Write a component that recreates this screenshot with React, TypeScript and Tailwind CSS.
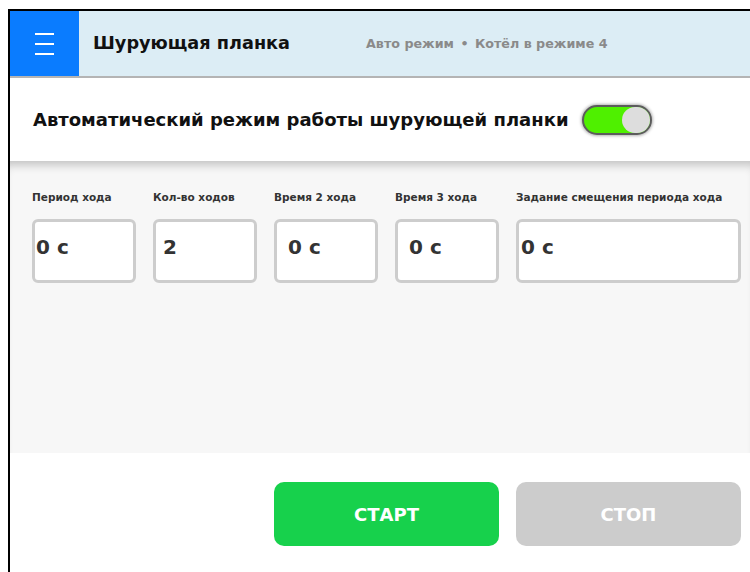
import React from "react";

type Field = { label: string; value: string; pad: string; wide?: boolean };

const fields: Field[] = [
  { label: "Период хода", value: "0 с", pad: "pl-[1px]" },
  { label: "Кол-во ходов", value: "2", pad: "pl-[7px]" },
  { label: "Время 2 хода", value: "0 с", pad: "pl-[11px]" },
  { label: "Время 3 хода", value: "0 с", pad: "pl-[11px]" },
  { label: "Задание смещения периода хода", value: "0 с", pad: "pl-[2px]", wide: true },
];

export default function App() {
  return (
    <div className="flex min-h-screen flex-col overflow-hidden bg-white font-['DejaVu_Sans',Verdana,sans-serif]">
      <div className="ml-2 mt-[9px] flex-1 border-l-2 border-t-2 border-black">
        <header className="flex h-[67px] items-center border-b-2 border-[#b4b4b4] bg-[#dcedf5]">
          <div className="flex h-full w-[69px] flex-col items-center justify-center gap-[8px] bg-[#0a7cff]">
            <span className="h-[2px] w-[19px] bg-white" />
            <span className="h-[2px] w-[19px] bg-white" />
            <span className="h-[2px] w-[19px] bg-white" />
          </div>
          <h1 className="ml-[14px] text-[17.7px] font-bold text-[#111]">Шурующая планка</h1>
          <div className="ml-[76px] text-[12.7px] font-bold text-[#8a8a8a]">
            Авто режим <span className="mx-[2px]">•</span> Котёл в режиме 4
          </div>
        </header>

        <div className="flex h-[83px] items-center pl-[23px]">
          <span className="w-[546px] text-[18px] font-bold text-[#111]">Автоматический режим работы шурующей планки</span>
          <Toggle />
        </div>

        <section className="h-[292px] bg-[#f7f7f7] pl-[22px] pr-[9px] pt-[29px] shadow-[inset_0_10px_10px_-6px_rgba(0,0,0,0.22)]">
          <div className="grid grid-cols-6 gap-x-[17px]">
            {fields.map((f) => (
              <div key={f.label} className={f.wide ? "col-span-2" : ""}>
                <p className="h-[14px] text-[10.5px] font-bold leading-[14px] text-[#333]">{f.label}</p>
                <div
                  className={`mt-[15px] h-[64px] rounded-[6px] border-[3px] border-[#cdcdcd] bg-white pt-[13px] text-[20px] font-bold leading-[24px] text-[#333] ${f.pad}`}
                >
                  {f.value}
                </div>
              </div>
            ))}
          </div>
        </section>

        <div className="grid grid-cols-6 gap-x-[17px] pl-[22px] pr-[9px] pt-[29px]">
          <button className="col-span-2 col-start-3 flex h-[64px] items-center justify-center rounded-[10px] bg-[#17d14c] text-[18px] font-bold text-white">
            СТАРТ
          </button>
          <button className="col-span-2 flex h-[64px] items-center justify-center rounded-[10px] bg-[#cccccc] text-[18px] font-bold text-white">
            СТОП
          </button>
        </div>
      </div>
    </div>
  );
}

function Toggle() {
  return (
    <div className="ml-[3px] flex h-[30px] w-[70px] shrink-0 items-center justify-end rounded-full border-2 border-[#5c5c5c] bg-[#4ff000] shadow-[0_0_3px_1px_rgba(0,0,0,0.3)]">
      <span className="h-[26px] w-[28px] rounded-full bg-[#dddddd]" />
    </div>
  );
}
